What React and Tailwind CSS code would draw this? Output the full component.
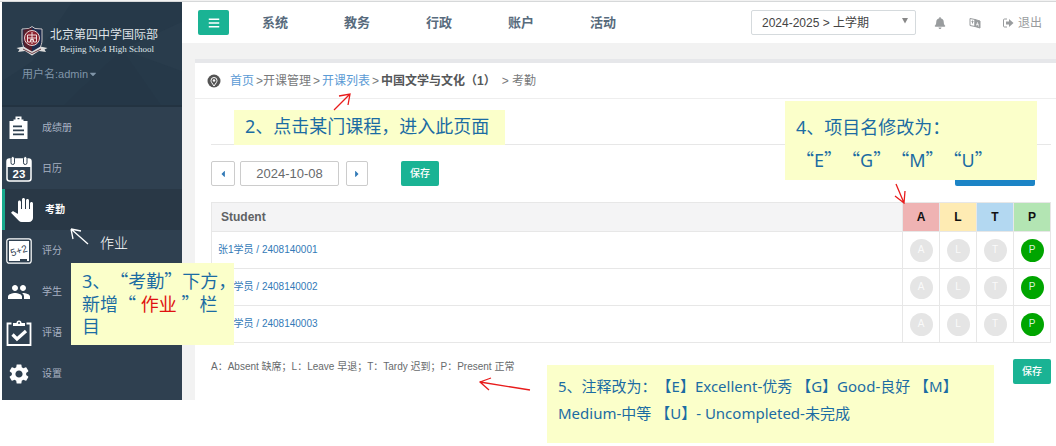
import { useState } from 'react';
import { FaBars, FaBell, FaCaretDown, FaCaretLeft, FaCaretRight } from 'react-icons/fa';
import { MdPanTool, MdPeople, MdSettings } from 'react-icons/md';

const NAV = ['系统', '教务', '行政', '账户', '活动'];

const COLUMNS = [
  { code: 'A', head: 'bg-[#efb3b3]' },
  { code: 'L', head: 'bg-[#feebb3]' },
  { code: 'T', head: 'bg-[#b3d8f1]' },
  { code: 'P', head: 'bg-[#b3e5b3]' },
];

const STUDENTS = [
  { id: '2408140001', name: '张1学员' },
  { id: '2408140002', name: '张2学员' },
  { id: '2408140003', name: '张3学员' },
];

function GradebookIcon() {
  return (
    <svg viewBox="0 0 24 24" className="size-6" fill="currentColor">
      <path d="M8.500 0.500h6v4h-6z M10.500 2v1.500h2V2z" fillRule="evenodd" />
      <path d="M2.500 5h4V3.500h10V5h4v18h-18z M6 9.500v1.800h9V9.500z M6 13.500v1.800h11v-1.800z M6 17.500v1.800h11v-1.800z" fillRule="evenodd" />
    </svg>
  );
}

function CalendarIcon() {
  return (
    <svg viewBox="0 0 26 26" className="size-[26px]">
      <rect x="1" y="3" width="24" height="22" rx="2.500" fill="none" stroke="#fff" strokeWidth="1.500" />
      <path d="M1 3h24v8H1z" fill="#fff" />
      <rect x="5" y="0.500" width="3.500" height="8" rx="1.700" fill="#fff" stroke="#2f4050" />
      <rect x="17.500" y="0.500" width="3.500" height="8" rx="1.700" fill="#fff" stroke="#2f4050" />
      <text x="13" y="22" textAnchor="middle" fill="#fff" fontSize="11.500" fontWeight="700" fontFamily="Liberation Sans, sans-serif">23</text>
    </svg>
  );
}

function GradeIcon() {
  return (
    <svg viewBox="0 0 26 26" className="size-[26px]">
      <rect x="0.800" y="0.800" width="24.400" height="24.400" rx="2.500" fill="none" stroke="#fff" strokeWidth="1.200" />
      <path d="M3 3h20v20h-2v-2h-7v2H3z" fill="#fff" />
      <text x="13" y="16" textAnchor="middle" fill="#2f4050" fontSize="10" transform="rotate(-18 13 13)" fontFamily="Liberation Sans, sans-serif">5+2</text>
    </svg>
  );
}

function CommentIcon() {
  return (
    <svg viewBox="0 0 26 26" className="size-[26px]" fill="none" stroke="#fff">
      <path d="M5.500 3.500H1.500V25h23V3.500h-4" strokeWidth="1.800" />
      <path d="M7 6V3h3.500a2.500 2.500 0 0 1 5 0H19v3z" fill="#fff" stroke="none" />
      <circle cx="13" cy="3" r="1" fill="#2f4050" stroke="none" />
      <path d="M6.500 14.500l4.500 4.500 9-8" strokeWidth="3.200" />
    </svg>
  );
}

const MENU = [
  { label: '成绩册', icon: <GradebookIcon /> },
  { label: '日历', icon: <CalendarIcon /> },
  { label: '考勤', icon: <MdPanTool className="size-6" />, active: true },
  { label: '评分', icon: <GradeIcon /> },
  { label: '学生', icon: <MdPeople className="size-6" /> },
  { label: '评语', icon: <CommentIcon /> },
  { label: '设置', icon: <MdSettings className="size-6" /> },
];

function Crest() {
  return (
    <svg viewBox="0 0 32 30" className="h-[30px] w-8">
      <path d="M16 0.500l3 2 7 .5v11c0 7-4 11-10 14.500C10 25 6 21 6 14V3l7-.5z" fill="#1e2c4e" stroke="#c9c4c4" />
      <path d="M16 2v25c-5-3-8.500-6-8.500-12V4z" fill="#571f2b" />
      <circle cx="16" cy="12" r="7.500" fill="#8b2330" stroke="#e3d2d2" />
      <path d="M16 6v12M11.500 9h9v3h-9zM11.500 12v4h3v-2.500h3V16h3v-4" fill="none" stroke="#f0dede" />
      <path d="M0.500 22l7-1.500 8.500 5 8.500-5 7 1.500-3 1.500 1.500 2.500-7-1-7 4.500-7-4.500-7 1 1.500-2.500z" fill="#ddd" />
      <path d="M7 23l9 4.500 9-4.500" fill="none" stroke="#6b3a42" />
    </svg>
  );
}

function Sidebar() {
  return (
    <aside className="w-[180px] shrink-0 bg-[#2f4050] pb-1.5">
      <div className="relative h-[105px] overflow-hidden bg-[#263949] px-3.5 pt-6">
        <svg className="absolute inset-0 size-full" viewBox="0 0 180 106" preserveAspectRatio="none">
          <path d="M0 0h70L30 60 0 80z" fill="#293c4c" />
          <path d="M180 20v50l-60-22z" fill="#293c4c" />
          <path d="M60 106l60-58 40 58z" fill="#253747" />
          <path d="M0 106h180v-2H0z" fill="#233341" />
        </svg>
        <div className="relative flex items-center gap-0.5">
          <Crest />
          <div className="whitespace-nowrap text-[#dfe4e8]">
            <div className="text-xs leading-4">北京第四中学国际部</div>
            <div className="pl-2.5 font-['Liberation_Serif',serif] text-[9px] leading-3">Beijing No.4 High School</div>
          </div>
        </div>
        <button className="relative mt-2.5 ml-1.5 flex items-center text-[11px] leading-4 text-[#8095a8]">
          用户名:admin
          <FaCaretDown className="size-2.5" />
        </button>
      </div>
      <nav>
        {MENU.map((item) => (
          <a
            key={item.label}
            href="#"
            className={`flex h-[41px] items-center gap-2 text-[10px] ${item.active
              ? 'border-l-3 border-[#19aa8d] bg-[#293846] pl-1 font-bold text-white'
              : 'pl-1 text-[#a7b1c2]'
              }`}
          >
            <span className="flex w-[26px] justify-center text-white">{item.icon}</span>
            <span className="pl-0.5">{item.label}</span>
          </a>
        ))}
      </nav>
    </aside>
  );
}

function TopBar() {
  return (
    <header className="flex h-[41px] items-center bg-white pr-3.5 pl-4">
      <button aria-label="菜单" className="flex h-[25px] w-[31px] items-center justify-center rounded-xs bg-[#1ab394] text-white">
        <FaBars className="size-3" />
      </button>
      <nav className="ml-[33px] flex gap-14 text-[13px] font-bold text-[#586b7d]">
        {NAV.map((n) => (
          <a key={n} href="#">{n}</a>
        ))}
      </nav>
      <div className="ml-auto flex items-center text-[#999c9e]">
        <div className="relative">
          <select aria-label="学期" className="h-[25px] w-[165px] appearance-none rounded-xs border border-[#d5dadd] bg-white pl-2.5 text-xs text-[#444]">
            <option>2024-2025 &gt; 上学期</option>
          </select>
          <svg viewBox="0 0 6 6" className="pointer-events-none absolute top-2 right-2 size-1.5" fill="#888">
            <path d="M0 0h6L3 5.500z" />
          </svg>
        </div>
        <a href="#" aria-label="通知" className="ml-[18px]"><FaBell className="size-3" /></a>
        <a href="#" aria-label="语言" className="ml-[23px]">
          <svg viewBox="0 0 12 12" className="size-3" fill="none" stroke="currentColor">
            <path d="M1 1.500l5 1v7l-5-1zM2.500 4.500h2M3.500 3.500v3" />
            <path d="M6 2.500l5 1.500v7l-5-1.500z" fill="currentColor" />
            <path d="M7.500 8.500l1-3 1 4M7.500 7.500h2" stroke="#fff" strokeWidth="0.700" />
          </svg>
        </a>
        <a href="#" className="ml-[21px] flex items-center gap-1 text-xs">
          <svg viewBox="0 0 12 12" className="size-3">
            <path d="M5 2H2.500Q1.500 2 1.500 3v6q0 1 1 1H5" fill="none" stroke="currentColor" />
            <path d="M4 4.500h3V2l4.500 4L7 10V7.500H4z" fill="currentColor" />
          </svg>
          退出
        </a>
      </div>
    </header>
  );
}

function Breadcrumb() {
  return (
    <div className="flex h-9 items-center border-b border-[#eeeeee] pl-3 text-xs whitespace-nowrap text-[#77797b]">
      <svg viewBox="0 0 14 14" className="mr-[9px] size-3.5">
        <circle cx="7" cy="7" r="6.500" fill="#555" />
        <path d="M7 12c-2-3-3-4-3-5.500a3 3 0 0 1 6 0C10 8 9 9 7 12z" fill="none" stroke="#fff" />
        <circle cx="7" cy="6.500" r="1.200" fill="#fff" />
      </svg>
      <a href="#" className="text-[#5b9bd5]">首页</a>
      <span className="ml-0.5">&gt;开课管理</span>
      <span className="mx-0.5">&gt;</span>
      <a href="#" className="text-[#5b9bd5]">开课列表</a>
      <span className="mx-0.5">&gt;</span>
      <b className="text-[#555759]">中国文学与文化（1）</b>
      <span className="ml-1.5">&gt; 考勤</span>
    </div>
  );
}

function SaveButton() {
  return (
    <button className="h-[25px] w-[38px] rounded-xs bg-[#1ab394] text-[10px] font-medium text-white">保存</button>
  );
}

function AttendanceTable() {
  const [marks, setMarks] = useState({});

  return (
    <table className="mt-4 w-full table-fixed border-collapse border border-[#e7e7e7] text-xs">
      <thead>
        <tr className="h-[29px]">
          <th className="border border-[#e7e7e7] bg-[#f4f4f5] pl-[9px] text-left text-[#5f6264]">Student</th>
          {COLUMNS.map((c) => (
            <th key={c.code} className={`w-[37px] border border-[#e7e7e7] text-[#111] ${c.head}`}>{c.code}</th>
          ))}
        </tr>
      </thead>
      <tbody>
        {STUDENTS.map((s) => (
          <tr key={s.id} className="h-[37px]">
            <td className="border border-[#e7e7e7] pl-1.5 text-[10px]">
              <a href="#" className="text-[#337ab7]">{s.name} / {s.id}</a>
            </td>
            {COLUMNS.map((c) => (
              <td key={c.code} className="border border-[#e7e7e7]">
                <button
                  onClick={() => setMarks({ ...marks, [s.id]: c.code })}
                  className={`mx-auto flex size-[23px] items-center justify-center rounded-full text-[10px] ${(marks[s.id] || 'P') === c.code
                    ? 'bg-[#00a500] text-[#d9f2d9]'
                    : 'bg-[#e5e5e5] text-[#fafafa]'
                    }`}
                >
                  {c.code}
                </button>
              </td>
            ))}
          </tr>
        ))}
      </tbody>
    </table>
  );
}

function Arrow({ className, d, box, color = '#e81c1c' }) {
  return (
    <svg className={`pointer-events-none absolute ${className}`} viewBox={box} fill="none" stroke={color} strokeWidth="1.300">
      <path d={d} />
    </svg>
  );
}

// full-width quotes come from the CJK face
function Cjk({ children }) {
  return <span className="font-['Noto_Sans_CJK_SC',sans-serif]">{children}</span>;
}

// Review notes pinned over the page
function Notes() {
  const note = "absolute bg-[#fbffca] font-['Noto_Sans','Noto_Sans_CJK_SC',sans-serif] text-[#1b6ca3] whitespace-nowrap [text-spacing-trim:space-all]";
  return (
    <>
      <div className={`${note} top-[110px] left-[234px] h-[35px] w-[271px] pl-[11px] text-lg leading-[33px]`}>
        2、点击某门课程，进入此页面
        <Arrow className="-top-[17px] left-[99px] h-[18px] w-[19px]" box="0 0 19 18" d="M1 17L17 1M6 3l11-2-2 11" />
      </div>

      <div className={`${note} top-[263px] left-[71px] h-[82px] w-[163px] pt-1.5 pl-[11px] text-lg leading-[22px]`}>
        <div>3、<Cjk>“</Cjk>考勤<Cjk>”</Cjk>下方，</div>
        <div>新增<Cjk>“</Cjk> <span className="text-[#e01010]">作业</span> <Cjk>”</Cjk>栏</div>
        <div>目</div>
      </div>
      <div className="absolute top-[234px] left-[100px] text-sm leading-[18px] font-light text-white">
        作业
        <Arrow className="-top-[6px] -left-[30px] h-[17px] w-[19px]" box="0 0 19 17" color="#fff" d="M18 16L1 1M1 1l2 10M1 1l10 2" />
      </div>

      <div className={`${note} top-[101px] right-[19px] h-[79px] w-[252px] pt-2.5 pl-[11px] text-lg leading-8`}>
        <div>4、项目名修改为：</div>
        <div className="flex">
          {['E', 'G', 'M', 'U'].map((x) => (
            <span key={x}><Cjk>“</Cjk>{x}<Cjk>”</Cjk></span>
          ))}
        </div>
        <Arrow className="top-[82px] left-[109px] h-[21px] w-[13px]" box="0 0 13 21" d="M2 1l8 19M1 13l9 7 1-12" />
      </div>

      <div className={`${note} top-[365px] left-[547px] h-[78px] w-[447px] pt-2 pl-[11px] text-[15px] leading-[27px]`}>
        <div>5、注释改为：【E】Excellent-优秀 【G】Good-良好 【M】</div>
        <div>Medium-中等 【U】- Uncompleted-未完成</div>
        <Arrow className="top-[11px] -left-[68px] h-[16px] w-[52px]" box="0 0 52 16" d="M51 14L1 6M12 2L1 6l9 8" />
      </div>
    </>
  );
}

export default function App() {
  return (
    <div className="relative bg-white pb-[46px] font-['Liberation_Sans','Noto_Sans_CJK_SC',sans-serif]">
      <div className="h-0.5 border-b border-[#d6d8d9] bg-[#f2f2f2]"></div>
      <div className="flex pl-0.5">
        <Sidebar />
        <div className="flex min-w-0 flex-1 flex-col bg-[#f2f2f2]">
          <TopBar />
          <main className="mt-4 ml-[13px] flex-1 border-t-4 border-[#e6e7ea] bg-white">
            <Breadcrumb />
            <div className="pr-[5px] pl-4">
              <div className="h-[46px] border-b border-[#e7e7e7]"></div>
              <div className="mt-4 flex items-center">
                <button aria-label="前一天" className="flex h-[25px] w-6 items-center justify-center rounded-xs border border-[#ccc] text-[#337ab7]">
                  <FaCaretLeft className="size-2.5" />
                </button>
                <input aria-label="日期" defaultValue="2024-10-08" className="ml-[5px] h-[25px] w-[99px] rounded-xs border border-[#ccc] text-center text-[13px] text-[#676a6c]" />
                <button aria-label="后一天" className="mr-[33px] ml-[7px] flex h-[25px] w-[22px] items-center justify-center rounded-xs border border-[#ccc] text-[#337ab7]">
                  <FaCaretRight className="size-2.5" />
                </button>
                <SaveButton />
                <button aria-label="导出" className="mr-4 ml-auto h-[25px] w-20 rounded-xs bg-[#1c84c6]"></button>
              </div>
              <AttendanceTable />
              <div className="mt-4 flex items-start justify-between">
                <p className="text-[10px] leading-4 text-[#676a6c]">
                  A：Absent 缺席；L：Leave 早退；T：Tardy 迟到；P：Present 正常
                </p>
                <SaveButton />
              </div>
            </div>
          </main>
        </div>
      </div>
      <Notes />
    </div>
  );
}
